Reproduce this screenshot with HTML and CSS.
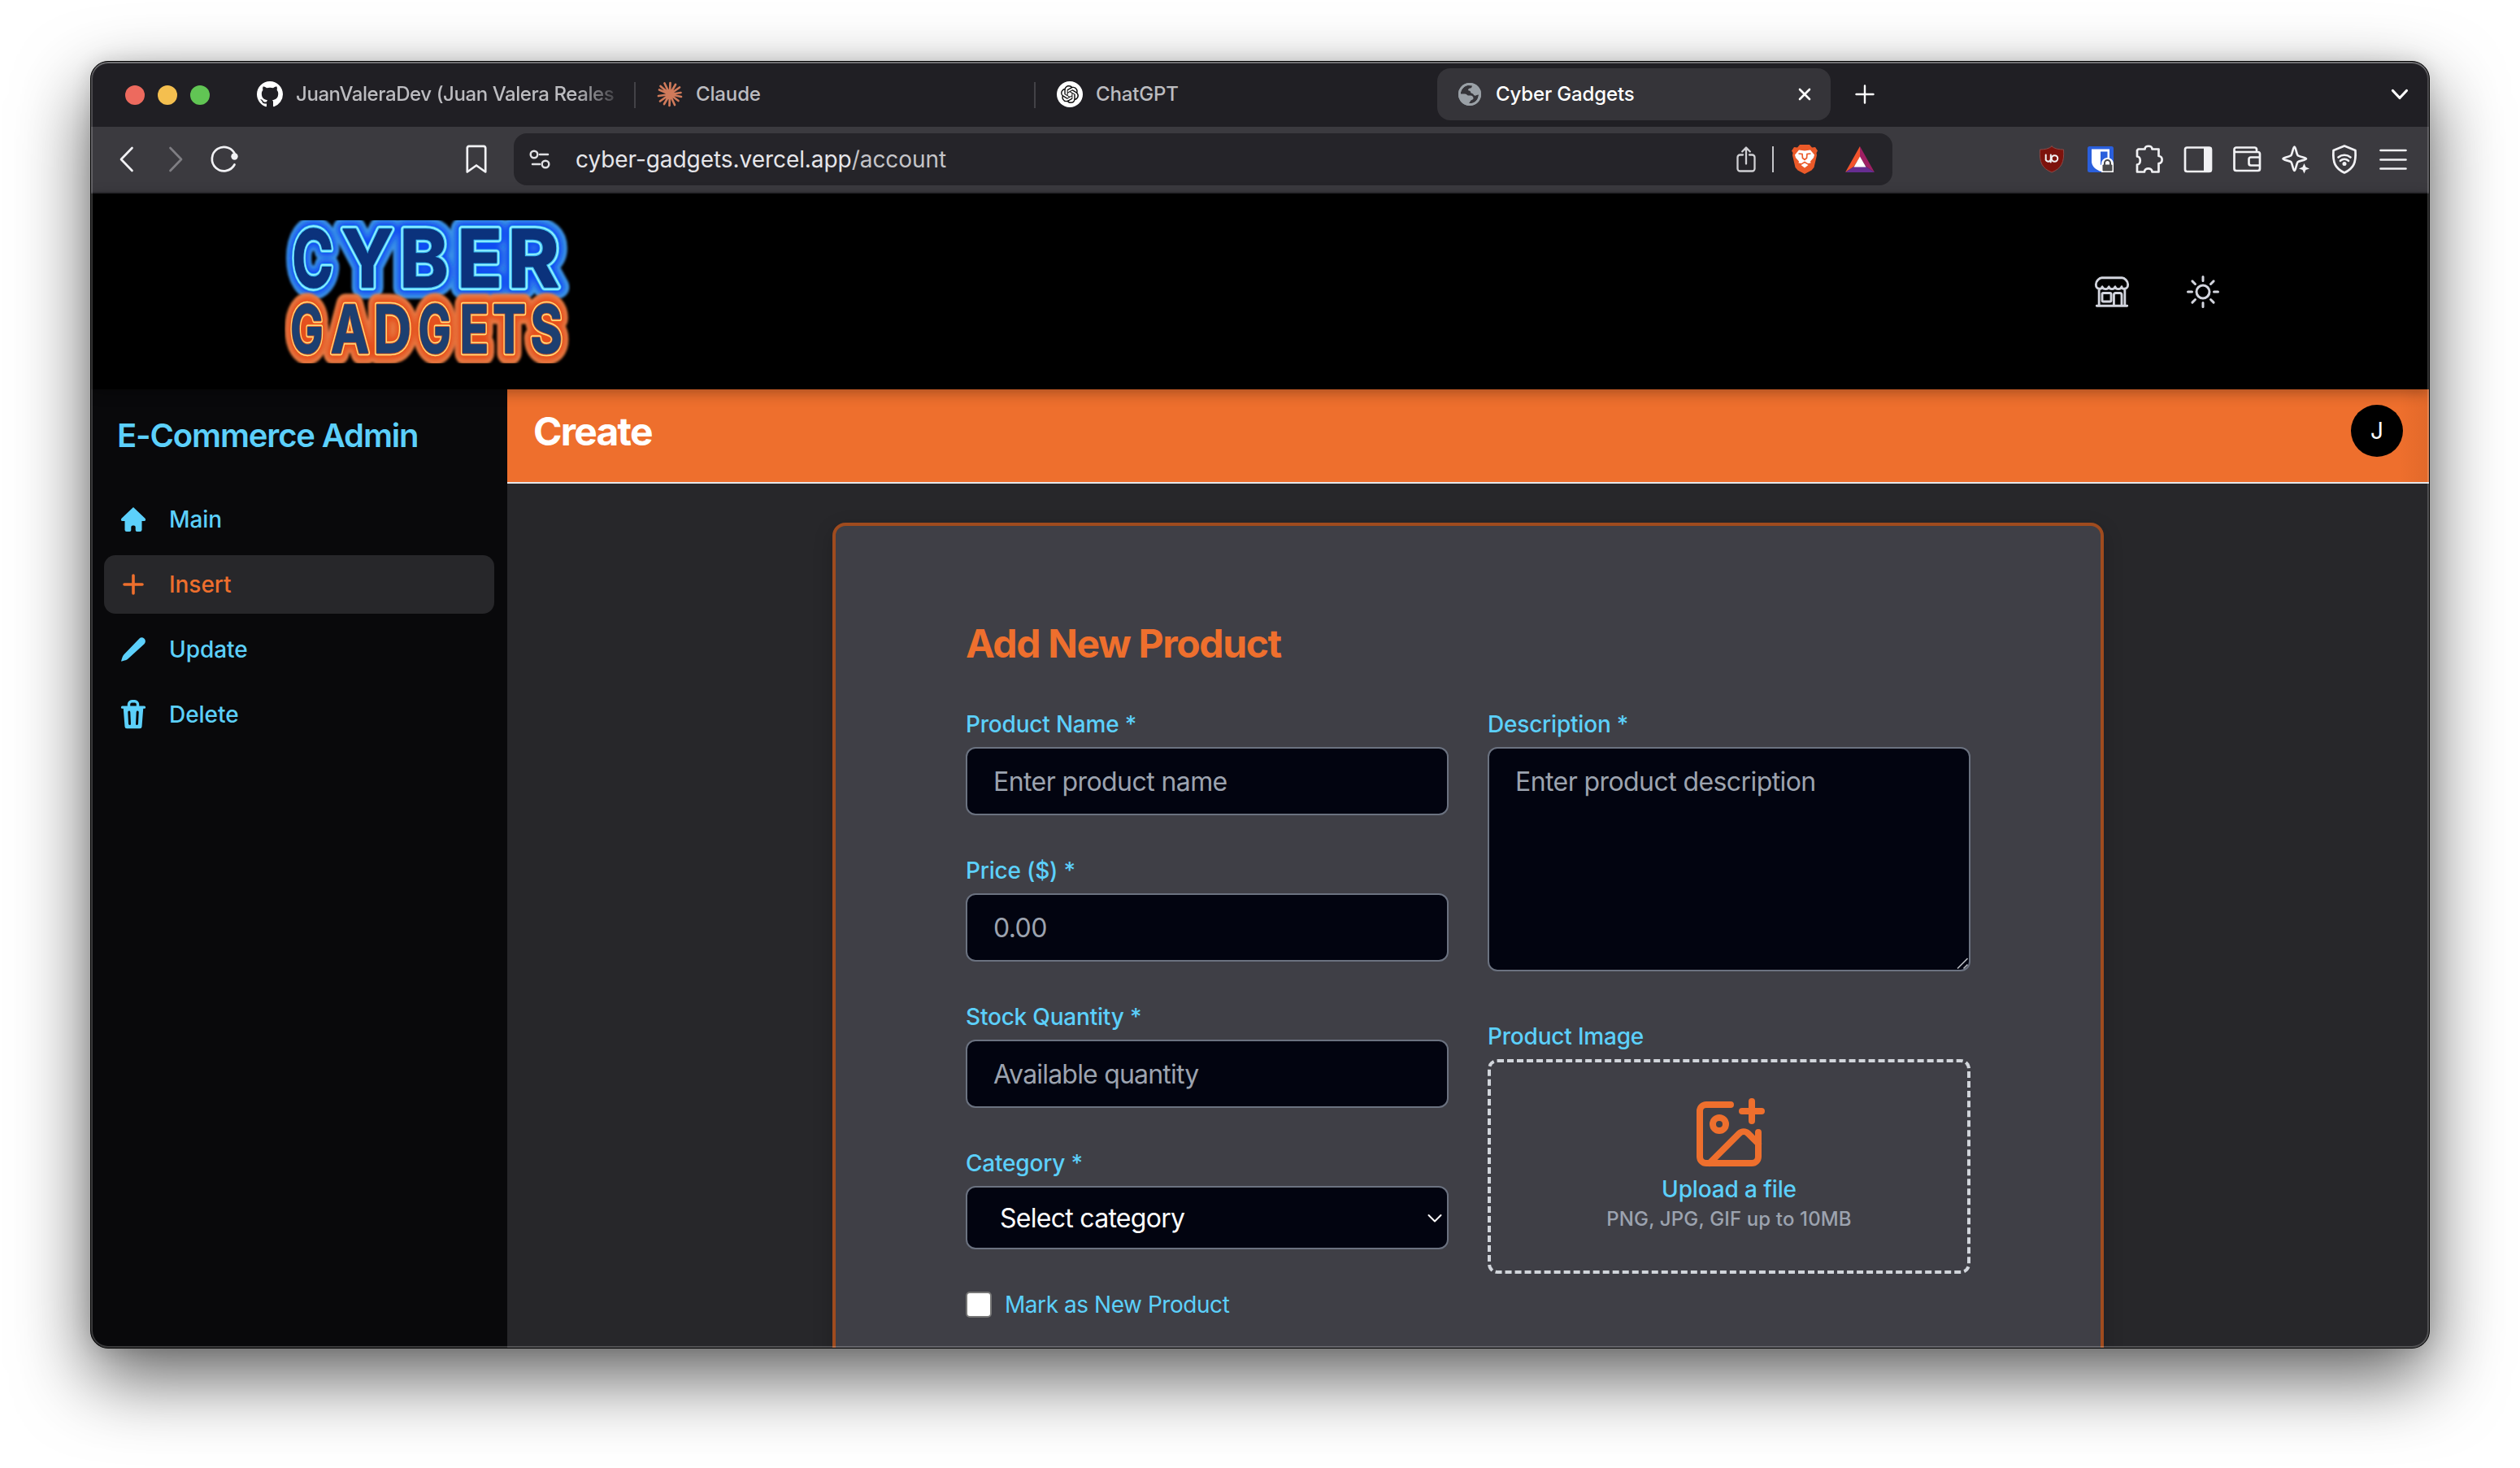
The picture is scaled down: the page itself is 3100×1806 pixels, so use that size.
FILE: index.html
```html
<!DOCTYPE html>
<html lang="en">
<head>
<meta charset="utf-8">
<title>Cyber Gadgets</title>
<link rel="stylesheet" href="styles.css">
</head>
<body>
<div class="window">
  <div class="tabstrip">
    <div class="lights"><i class="light red"></i><i class="light yellow"></i><i class="light green"></i></div>
    <div class="tabs">
      <div class="tab">
        <svg class="favicon" viewBox="0 0 16 16" fill="#fff"><path d="M8 0C3.58 0 0 3.58 0 8c0 3.54 2.29 6.53 5.47 7.59.4.07.55-.17.55-.38 0-.19-.01-.82-.01-1.49-2.01.37-2.53-.49-2.69-.94-.09-.23-.48-.94-.82-1.13-.28-.15-.68-.52-.01-.53.63-.01 1.08.58 1.23.82.72 1.21 1.87.87 2.33.66.07-.52.28-.87.51-1.07-1.78-.2-3.64-.89-3.64-3.95 0-.87.31-1.59.82-2.15-.08-.2-.36-1.02.08-2.12 0 0 .67-.21 2.2.82.64-.18 1.32-.27 2-.27s1.36.09 2 .27c1.53-1.04 2.2-.82 2.2-.82.44 1.1.16 1.92.08 2.12.51.56.82 1.27.82 2.15 0 3.07-1.87 3.75-3.65 3.95.29.25.54.73.54 1.48 0 1.07-.01 1.93-.01 2.2 0 .21.15.46.55.38A8.01 8.01 0 0 0 16 8c0-4.42-3.58-8-8-8z"/></svg>
        <span class="tab-title faded">JuanValeraDev (Juan Valera Reales</span>
      </div>
      <div class="tab divided">
        <svg class="favicon" viewBox="0 0 32 32" stroke="#d07a5a" stroke-width="2.7" stroke-linecap="round"><path d="M16 16 9.500 2.500M16 16 16.500 2M16 16 23 4M16 16 28 7.500M16 16 29.500 14M16 16 30 19M16 16 26.500 24M16 16 22 29M16 16 15.500 30M16 16 9 28M16 16 4 24.500M16 16 2 18M16 16 3 10.500M16 16 4.500 6"/></svg>
        <span class="tab-title">Claude</span>
      </div>
      <div class="tab divided">
        <svg class="favicon" viewBox="0 0 32 32"><circle cx="16" cy="16" r="16" fill="#fff"/><path transform="translate(5 5) scale(.917)" fill="#111" d="M22.2819 9.8211a5.9847 5.9847 0 0 0-.5157-4.9108 6.0462 6.0462 0 0 0-6.5098-2.9A6.0651 6.0651 0 0 0 4.9807 4.1818a5.9847 5.9847 0 0 0-3.9977 2.9 6.0462 6.0462 0 0 0 .7427 7.0966 5.98 5.98 0 0 0 .511 4.9107 6.051 6.051 0 0 0 6.5146 2.9001A5.9847 5.9847 0 0 0 13.2599 24a6.0557 6.0557 0 0 0 5.7718-4.2058 5.9894 5.9894 0 0 0 3.9977-2.9001 6.0557 6.0557 0 0 0-.7475-7.0729zm-9.022 12.6081a4.4755 4.4755 0 0 1-2.8764-1.0408l.1419-.0804 4.7783-2.7582a.7948.7948 0 0 0 .3927-.6813v-6.7369l2.02 1.1686a.071.071 0 0 1 .038.052v5.5826a4.504 4.504 0 0 1-4.4945 4.4944zm-9.6607-4.1254a4.4708 4.4708 0 0 1-.5346-3.0137l.142.0852 4.783 2.7582a.7712.7712 0 0 0 .7806 0l5.8428-3.3685v2.3324a.0804.0804 0 0 1-.0332.0615L9.74 19.9502a4.4992 4.4992 0 0 1-6.1408-1.6464zM2.3408 7.8956a4.485 4.485 0 0 1 2.3655-1.9728V11.6a.7664.7664 0 0 0 .3879.6765l5.8144 3.3543-2.0201 1.1685a.0757.0757 0 0 1-.071 0l-4.8303-2.7865A4.504 4.504 0 0 1 2.3408 7.872zm16.5963 3.8558L13.1038 8.364 15.1192 7.2a.0757.0757 0 0 1 .071 0l4.8303 2.7913a4.4944 4.4944 0 0 1-.6765 8.1042v-5.6772a.79.79 0 0 0-.407-.667zm2.0107-3.0231l-.142-.0852-4.7735-2.7818a.7759.7759 0 0 0-.7854 0L9.409 9.2297V6.8974a.0662.0662 0 0 1 .0284-.0615l4.8303-2.7866a4.4992 4.4992 0 0 1 6.6802 4.66zM8.3065 12.863l-2.02-1.1638a.0804.0804 0 0 1-.038-.0567V6.0742a4.4992 4.4992 0 0 1 7.3757-3.4537l-.142.0805L8.704 5.459a.7948.7948 0 0 0-.3927.6813zm1.0976-2.3654l2.602-1.4998 2.6069 1.4998v2.9994l-2.5974 1.4997-2.6067-1.4997Z"/></svg>
        <span class="tab-title">ChatGPT</span>
      </div>
      <div class="tab active">
        <svg class="favicon" viewBox="0 0 32 32"><circle cx="16" cy="16" r="14" fill="#9aa0a6"/><path d="M13.500 5C9 6 5 10 4.800 15.500H10c2 0 2.500 1.500 4 2h3c2 0 3.500 1.500 3.500 3.500 0 1.500-2 1.700-3 2.500-1 1-1 2-2.500 3.500 5 1 9.500-2 11-6.500l1-4-2.500.5c-1.500 1.500-3.500.5-4-1-1-1.500-3.500-1-3.500-3 0-1.500-2-1-3-2 0-1.500 1-2.500 2.500-2.500 2 0 2-1.500 2.500-3Z" fill="#353439"/><circle cx="16" cy="16" r="12.600" fill="none" stroke="#9aa0a6" stroke-width="2.800"/></svg>
        <span class="tab-title">Cyber Gadgets</span>
        <svg class="tab-close" viewBox="0 0 16 16" stroke="#fff" stroke-width="2.600" stroke-linecap="round"><path d="M2 2 14 14M14 2 2 14"/></svg>
      </div>
    </div>
    <svg class="new-tab" viewBox="0 0 24 24" stroke="#fff" stroke-width="2.400" stroke-linecap="round"><path d="M12 1.500V22.500M1.500 12H22.500"/></svg>
    <svg class="tab-menu" viewBox="0 0 24 16" fill="none" stroke="#fff" stroke-width="3.200" stroke-linecap="round" stroke-linejoin="round"><path d="M3.500 3.500 12 12.500 20.500 3.500"/></svg>
  </div>

  <div class="toolbar">
    <div class="nav-buttons">
      <svg class="tool" viewBox="0 0 60 40"><path d="M36.500 6 23 20 36.500 34"/></svg>
      <svg class="tool dim" viewBox="0 0 60 40"><path d="M23.500 6 37 20 23.500 34"/></svg>
      <svg class="tool" viewBox="0 0 60 40"><path d="M42.500 26.500A14.700 14.700 0 1 1 43.500 15"/><circle cx="42.500" cy="16.500" r="4.200" fill="#f1f1f4" stroke="none"/></svg>
    </div>
    <svg class="tool" viewBox="0 0 60 40"><path d="M21 3.800H39A2.500 2.500 0 0 1 41.200 6V35.500L30 27.500 18.800 35.500V6A2.500 2.500 0 0 1 21 3.800Z"/></svg>
    <div class="url-bar">
      <svg class="site-info" viewBox="0 0 26 24" fill="none" stroke="#dfdfe3" stroke-width="2.500" stroke-linecap="round"><circle cx="6" cy="6" r="4.300"/><path d="M13 6H23"/><circle cx="20" cy="18" r="4.300"/><path d="M4 18H13"/></svg>
      <span class="url">cyber-gadgets.vercel.app<span class="url-path">/account</span></span>
      <svg class="share" viewBox="0 0 24 34" fill="none" stroke="#cfcfd3" stroke-width="2.300" stroke-linecap="round" stroke-linejoin="round"><path d="M8 11.500H4.500A3 3 0 0 0 1.500 14.500V28.500A3 3 0 0 0 4.500 31.500H19.500A3 3 0 0 0 22.500 28.500V14.500A3 3 0 0 0 19.500 11.500H16M12 22.500V3M7.200 7.500 12 2.500 16.800 7.500"/></svg>
      <i class="bar-sep"></i>
      <svg class="brave" viewBox="0 0 32 36"><path d="M10 0H22L25 3.500 29 3 32 7.500 30.500 10 31 13 27.500 28 24.500 31.500 16 36 7.500 31.500 4.500 28 1 13 1.500 10 0 7.500 3 3 7 3.500Z" fill="#eb5a29"/><path d="M16 7.500 23 6.500 28 12.500 27 16 23 20.500 23.500 22.500 20 23 16 20.500 12 23 8.500 22.500 9 20.500 5 16 4 12.500 9 6.500Z" fill="#fff"/><path d="M16 22.500 20.500 25 16 28.500 11.500 25Z" fill="#fff"/><path d="M8.500 11 13 11.500 13.500 16.500 16 18.500 18.500 16.500 19 11.500 23.500 11" fill="none" stroke="#eb5a29" stroke-width="1.700"/></svg>
      <svg class="bat" viewBox="0 0 36 32"><path d="M18 0V13L10.500 25 0 32Z" fill="#f2542d"/><path d="M18 0V13L25.500 25 36 32Z" fill="#9e1f63"/><path d="M0 32H36L25.500 25H10.500Z" fill="#662d91"/><path d="M18 12.500 25.500 25.500H10.500Z" fill="#fff"/></svg>
    </div>
    <div class="extensions">
      <svg class="tool" viewBox="0 0 60 40"><path d="M30 4C33 7 39 8 44.500 8 45.500 24 42 31 30 36 18 31 14.500 24 15.500 8 21 8 27 7 30 4Z" fill="#7d120c" stroke="#8b4a48" stroke-width="1"/><path d="M22.700 14.500V19A3 3 0 0 0 28.500 20.500M28.800 14.500V23.500" stroke-width="2"/><circle cx="33.500" cy="19" r="3.800" stroke-width="2"/></svg>
      <svg class="tool" viewBox="0 0 60 40"><rect x="14" y="4" width="32" height="32" rx="2.500" fill="#2a5fdc" stroke="none"/><path d="M19 7.500H41V22C41 28 37 32 30 35 23 32 19 28 19 22Z" fill="#fff" stroke="none"/><path d="M30 10.500H38.500V22L30 27Z" fill="#2a5fdc" stroke="none"/><path d="M31 36V26A7.500 7.500 0 0 1 46 25V36Z" fill="#fff" stroke="none"/><rect x="32.500" y="26.500" width="12" height="8" rx="1" fill="#4a4a4a" stroke="none"/><path d="M35 27V24.500A3.500 3.500 0 0 1 42 24.500V27" stroke="#4a4a4a" stroke-width="2"/></svg>
      <svg class="tool" viewBox="0 0 60 40"><path d="M16.500 7.500H24.500C24.500 2.500 33.500 2.500 33.500 7.500H41.500V16C47 16 47 25 41.500 25V35.500H33.500C33.500 30 24 30 24 35.500H15V26.500C20 26.500 20 16.500 15 16.500V9Z"/></svg>
      <svg class="tool" viewBox="0 0 60 40"><rect x="14" y="5.500" width="32" height="29.500" rx="2.500"/><path d="M37 5H45A2 2 0 0 1 47 7V33A2 2 0 0 1 45 35H37Z" fill="#f1f1f4" stroke="none"/></svg>
      <svg class="tool" viewBox="0 0 60 40"><path d="M42 9V7.500A2.500 2.500 0 0 0 39.500 5.500H17A2.500 2.500 0 0 0 14.500 8V31.500A2.500 2.500 0 0 0 17 34H43.500A2.500 2.500 0 0 0 46 31.500V13.500A2.500 2.500 0 0 0 43.500 11H16M46 17.500H35A2.500 2.500 0 0 0 32.500 20V25A2.500 2.500 0 0 0 35 27.500H46"/></svg>
      <svg class="tool" viewBox="0 0 60 40"><path d="M28.500 4.500C30 4.500 31 13 32.500 15 34 17 43 17.500 43 19.200 43 21 34 21.500 32.500 23.500 31 25.500 30 34 28.500 34 27 34 26 25.500 24.500 23.500 23 21.500 14.500 21 14.500 19.200 14.500 17.500 23 17 24.500 15 26 13 27 4.500 28.500 4.500Z"/><path d="M40.500 25 42.500 29.500 47 31.500 42.500 33 40.500 37.500 38.500 33 34 31.500 38.500 29.500Z" fill="#f1f1f4" stroke="none"/></svg>
      <svg class="tool" viewBox="0 0 60 40"><path d="M30 3.500 43.500 9C44.500 24 41.500 31 30 36.500 18.500 31 15.500 24 16.500 9Z"/><path d="M22.500 17.500C27 13.800 33 13.800 37.500 17.500M25 21.800C28 19.300 32 19.300 35 21.800"/><circle cx="30" cy="25.500" r="2.500" fill="#f1f1f4" stroke="none"/></svg>
      <svg class="tool" viewBox="0 0 60 40"><path d="M14.500 9H45.500M14.500 20.500H45.500M14.500 31.500H45.500"/></svg>
    </div>
  </div>

  <header class="site-header">
    <svg class="logo" viewBox="0 0 352 176" role="img" aria-label="Cyber Gadgets">
      <defs>
        <filter id="soft" x="-15%" y="-30%" width="130%" height="160%"><feGaussianBlur stdDeviation="1.500"/></filter>
        <filter id="haze" x="-15%" y="-30%" width="130%" height="160%"><feGaussianBlur stdDeviation="3"/></filter>
        <g id="cyber" font-size="97.600">
          <text x="9.200" y="81.500" textLength="50.800" lengthAdjust="spacingAndGlyphs">C</text>
          <text x="70.300" y="81.500" textLength="63.500" lengthAdjust="spacingAndGlyphs">Y</text>
          <text x="141.200" y="81.500" textLength="60.500" lengthAdjust="spacingAndGlyphs">B</text>
          <text x="212.200" y="81.500" textLength="55.600" lengthAdjust="spacingAndGlyphs">E</text>
          <text x="274.200" y="81.500" textLength="63.700" lengthAdjust="spacingAndGlyphs">R</text>
        </g>
        <g id="gadgets" font-size="81">
          <text x="7.200" y="162.500" textLength="40.300" lengthAdjust="spacingAndGlyphs">G</text>
          <text x="56.900" y="162.500" textLength="47" lengthAdjust="spacingAndGlyphs">A</text>
          <text x="109.500" y="162.500" textLength="46.500" lengthAdjust="spacingAndGlyphs">D</text>
          <text x="164.600" y="162.500" textLength="40.300" lengthAdjust="spacingAndGlyphs">G</text>
          <text x="215.500" y="162.500" textLength="35.700" lengthAdjust="spacingAndGlyphs">E</text>
          <text x="255.900" y="162.500" textLength="41" lengthAdjust="spacingAndGlyphs">T</text>
          <text x="302.600" y="162.500" textLength="39.200" lengthAdjust="spacingAndGlyphs">S</text>
        </g>
      </defs>
      <use href="#cyber" stroke="#3f97e6" stroke-width="29" filter="url(#soft)"/>
      <use href="#cyber" stroke="#0f49f2" stroke-width="17" filter="url(#haze)"/>
      <use href="#gadgets" stroke="#e8804a" stroke-width="27" filter="url(#soft)"/>
      <use href="#gadgets" stroke="#e4501f" stroke-width="17" filter="url(#haze)"/>
      <use href="#cyber" stroke="#35b4f4" stroke-width="9.500"/>
      <use href="#cyber" stroke="#92f2ff" stroke-width="7.500"/>
      <use href="#cyber" stroke="#3fbdf2" stroke-width="4"/>
      <use href="#cyber" fill="#0b327c" stroke="#0b327c" stroke-width="1.500"/>
      <use href="#gadgets" stroke="#f2581f" stroke-width="8.500"/>
      <use href="#gadgets" stroke="#ffe27c" stroke-width="6.500"/>
      <use href="#gadgets" stroke="#e8622c" stroke-width="3.500"/>
      <use href="#gadgets" fill="#1d3f70" stroke="#1d3f70" stroke-width="1.500"/>
    </svg>
    <div class="header-actions">
      <svg class="header-icon" viewBox="-1 -1 50 50"><path d="M11 6H37C40 6 44.500 10 44.500 14.500 44.500 18 42.500 20 40 20 37.500 20.500 36.500 19 36.500 17.500 36 20 34.500 20.500 32 20.500 29.500 20.500 28.500 19 28 17.500 27.500 20 26.500 20.500 24 20.500 21.500 20.500 20.500 19 20 17.500 19.500 20 18 20.500 16 20.500 13.500 20.500 12 19 11.500 17.500 11 19.500 10 20.500 8 20 5.500 20 3.500 18 3.500 14.500 3.500 10 8 6 11 6ZM7.500 20.500V42M40.500 20.500V42M4.500 42H43.500M26.500 42V28A2.500 2.500 0 0 1 29 25.500H34A2.500 2.500 0 0 1 36.500 28V42"/><rect x="11.500" y="25.500" width="11.500" height="11" rx="1.500"/></svg>
      <svg class="header-icon" viewBox="0 0 48 48"><circle cx="24" cy="24" r="8"/><path d="M24 5.500V10.500M24 37.500V42.500M5.500 24H10.500M37.500 24H42.500M10.900 10.900 14.500 14.500M33.500 33.500 37.100 37.100M10.900 37.100 14.500 33.500M33.500 14.500 37.100 10.900"/></svg>
    </div>
  </header>

  <div class="app">
    <aside class="sidebar">
      <h2 class="brand">E-Commerce Admin</h2>
      <nav class="menu">
        <a class="menu-item"><svg class="menu-icon" viewBox="0 0 40 40" fill="currentColor"><path d="M20 5 34.500 18.800C35.800 20.300 35 22 33.500 22H30.500V33A2.200 2.200 0 0 1 28.300 35H24.500A1.800 1.800 0 0 1 22.700 33.200V29.500A2 2 0 0 0 20.700 27.500H19.300A2 2 0 0 0 17.300 29.500V33.200A1.800 1.800 0 0 1 15.500 35H11.700A2.200 2.200 0 0 1 9.500 33V22H6.500C5 22 4.200 20.300 5.500 18.800Z"/></svg>Main</a>
        <a class="menu-item selected"><svg class="menu-icon" viewBox="0 0 40 40" fill="none" stroke="currentColor" stroke-width="3.600" stroke-linecap="round"><path d="M20 9V31M9 20H31"/></svg>Insert</a>
        <a class="menu-item"><svg class="menu-icon" viewBox="0 0 40 40" fill="currentColor"><path d="M33.300 6.500C35.500 8.500 35.200 11.500 33.500 13.200L14 31C12.500 32.500 11 33 9.200 33.600L6 34.600C5.200 34.800 5 34.400 5.200 33.700L6.200 30.500C6.800 28.500 7.500 27.300 8.700 26L27.500 6.500C29.200 4.800 31.600 5 33.300 6.500Z"/></svg>Update</a>
        <a class="menu-item"><svg class="menu-icon" viewBox="0 0 40 40" fill="none" stroke-linecap="round"><path d="M14.500 10V7.500A3.700 3.700 0 0 1 18.200 3.800H21.800A3.700 3.700 0 0 1 25.500 7.500V10" stroke="currentColor" stroke-width="3.400"/><path d="M6.500 9.500H33.500A1.600 1.600 0 0 1 33.500 12.800H32.200L30.500 35A2.500 2.500 0 0 1 28 37.300H12A2.500 2.500 0 0 1 9.500 35L7.800 12.800H6.500A1.600 1.600 0 0 1 6.500 9.500Z" fill="currentColor"/><path d="M14.800 17 15.500 31.500M25.200 17 24.500 31.500" stroke="#09090b" stroke-width="3"/></svg>Delete</a>
      </nav>
    </aside>

    <div class="content">
      <div class="page-bar">
        <h1 class="page-title">Create</h1>
        <div class="avatar">J</div>
      </div>
      <main class="main">
        <section class="card">
          <h2 class="card-title">Add New Product</h2>
          <div class="form">
            <div class="column">
              <div class="field"><span class="label">Product Name *</span><div class="input placeholder">Enter product name</div></div>
              <div class="field"><span class="label">Price ($) *</span><div class="input placeholder">0.00</div></div>
              <div class="field"><span class="label">Stock Quantity *</span><div class="input placeholder tight">Available quantity</div></div>
              <div class="field"><span class="label">Category *</span>
                <div class="input select">Select category<svg class="caret" viewBox="0 0 18 12" fill="none" stroke="#fff" stroke-width="2" stroke-linecap="round" stroke-linejoin="round"><path d="M1.500 2 9 9.500 16.500 2"/></svg></div>
              </div>
              <div class="check-row"><i class="checkbox"></i><span class="check-label">Mark as New Product</span></div>
            </div>
            <div class="column">
              <div class="field"><span class="label">Description *</span>
                <div class="input textarea placeholder">Enter product description<svg class="grip" viewBox="0 0 14 14" stroke="#b5b8bd" stroke-width="1.600"><path d="M1 13.500 13.500 1M8.500 13.500 13.500 8.500"/></svg></div>
              </div>
              <div class="field image-field"><span class="label">Product Image</span>
                <div class="dropzone">
                  <svg class="upload-icon" viewBox="0 0 24 24" fill="none" stroke="#ee6f2d" stroke-width="2" stroke-linecap="round" stroke-linejoin="round"><path d="M16 5h6M19 2v6M21 11.500V19a2 2 0 0 1-2 2H5a2 2 0 0 1-2-2V5a2 2 0 0 1 2-2h7.500M21 15l-3.086-3.086a2 2 0 0 0-2.828 0L6 21"/><circle cx="9" cy="9" r="2"/></svg>
                  <span class="upload-link">Upload a file</span>
                  <span class="upload-hint">PNG, JPG, GIF up to 10MB</span>
                </div>
              </div>
            </div>
          </div>
        </section>
      </main>
    </div>
  </div>
</div>
</body>
</html>
```
FILE: styles.css
```css
* { box-sizing: border-box; margin: 0; padding: 0; }
svg { display: block; flex: none; }

body {
  width: 3100px;
  height: 1806px;
  padding: 75px 111px;
  overflow: hidden;
  background: #fff;
  font-family: Inter, "Liberation Sans", sans-serif;
  font-size: 28px;
  line-height: 40px;
}

/* Browser window */
.window {
  position: relative;
  display: flex;
  flex-direction: column;
  width: 2878px;
  height: 1584px;
  overflow: hidden;
  border: 1px solid #000;
  border-radius: 22px;
  background: #27272a;
  box-shadow: 0 36px 90px rgba(0, 0, 0, .62), 0 0 24px rgba(0, 0, 0, .12);
}
.window::after {
  content: "";
  position: absolute;
  inset: 0;
  z-index: 2;
  border-radius: 21px;
  box-shadow: inset 0 0 0 2px rgba(255, 255, 255, .2), inset 0 2px 0 rgba(255, 255, 255, .2);
  pointer-events: none;
}

/* Tab strip */
.tabstrip {
  display: flex;
  align-items: center;
  flex: none;
  height: 80px;
  padding: 0 24px 0 42px;
  background: #201f24;
}
.lights { display: flex; gap: 16px; padding-top: 1px; }
.light { width: 24px; height: 24px; border-radius: 50%; }
.red { background: #ed6a5e; }
.yellow { background: #f4bf4f; }
.green { background: #61c554; }
.tabs { display: flex; gap: 8px; margin-left: 34px; }
.tab {
  position: relative;
  display: flex;
  align-items: center;
  width: 484px;
  height: 64px;
  padding: 0 24px;
  gap: 16px;
  border-radius: 16px;
  color: #bcbcc0;
}
.tab.active { background: #353439; color: #fff; }
.divided::before {
  content: "";
  position: absolute;
  left: -4px;
  top: 17px;
  width: 2px;
  height: 32px;
  background: #434247;
}
.favicon { width: 32px; height: 32px; }
.tab-title {
  flex: 1;
  white-space: nowrap;
  font-size: 24px;
  font-weight: 500;
  letter-spacing: -.14px;
}
.faded {
  flex: none;
  letter-spacing: -.42px;
  -webkit-mask-image: linear-gradient(90deg, #000 88%, rgba(0, 0, 0, .25));
  mask-image: linear-gradient(90deg, #000 88%, rgba(0, 0, 0, .25));
}
.tab-close { width: 16px; height: 16px; }
.new-tab { width: 24px; height: 24px; margin-left: 30px; }
.tab-menu { width: 24px; height: 16px; margin-left: auto; }

/* Toolbar */
.toolbar {
  display: flex;
  align-items: center;
  flex: none;
  height: 82px;
  padding: 0 14px;
  border-bottom: 2px solid #2e2d32;
  background: #3b3a3f;
}
.tool {
  width: 60px;
  height: 40px;
  fill: none;
  stroke: #f1f1f4;
  stroke-width: 2.7;
  stroke-linecap: round;
  stroke-linejoin: round;
}
.dim { stroke: #7f7e83; }
.nav-buttons { display: flex; margin-right: 250px; }
.url-bar {
  display: flex;
  align-items: center;
  width: 1696px;
  height: 64px;
  margin-left: 16px;
  padding: 0 22px 0 19px;
  border-radius: 16px;
  background: #252429;
}
.site-info { width: 26px; height: 24px; }
.url { flex: 1; margin-left: 31px; color: #e6e6ea; letter-spacing: -.06px; }
.url-path { color: #c4c4c8; }
.share { width: 24px; height: 34px; }
.bar-sep { width: 2px; height: 32px; margin: 0 22px 0 20px; background: #c4c4c8; }
.brave { width: 32px; height: 36px; }
.bat { width: 36px; height: 32px; margin-left: 34px; }
.extensions { display: flex; margin-left: auto; }

/* Store header */
.site-header {
  position: relative;
  z-index: 1;
  display: flex;
  align-items: center;
  justify-content: space-between;
  flex: none;
  height: 241px;
  padding: 0 254px 0 238px;
  background: #000;
  box-shadow: 0 4px 16px rgba(0, 0, 0, .3);
}
.logo {
  width: 352px;
  height: 176px;
  overflow: hidden;
  font-family: Inter, sans-serif;
  font-weight: 700;
  fill: none;
  stroke-linejoin: round;
}
.header-actions { display: flex; gap: 64px; }
.header-icon {
  width: 48px;
  height: 48px;
  fill: none;
  stroke: #d3d5de;
  stroke-width: 3;
  stroke-linecap: round;
  stroke-linejoin: round;
}

/* Admin layout */
.app { display: flex; flex: 1; min-height: 0; }
.sidebar { width: 512px; padding: 29px 16px; background: #09090b; color: #5cd0fb; }
.brand { padding: 0 16px; font-size: 40px; font-weight: 600; line-height: 56px; letter-spacing: -1.15px; }
.menu { display: flex; flex-direction: column; gap: 8px; margin-top: 39px; }
.menu-item {
  display: flex;
  align-items: center;
  gap: 24px;
  height: 72px;
  padding: 0 16px;
  border-radius: 14px;
  font-weight: 500;
  letter-spacing: -.05px;
}
.selected { background: #27272a; color: #ee6f2d; }
.menu-icon { width: 40px; height: 40px; }

.content { display: flex; flex-direction: column; flex: 1; min-width: 0; }
.page-bar {
  display: flex;
  justify-content: space-between;
  flex: none;
  height: 116px;
  padding: 19px 32px 0;
  border-bottom: 2px solid #e5e7eb;
  background: linear-gradient(270deg, #e2692a, #ee6f2d 36px);
}
.page-title { padding-top: 1px; color: #fff; font-size: 48px; line-height: 64px; letter-spacing: -1.8px; }
.avatar {
  width: 64px;
  height: 64px;
  border-radius: 50%;
  background: #000;
  color: #fff;
  line-height: 65px;
  text-align: center;
}
.main { display: flex; justify-content: center; flex: 1; min-height: 0; overflow: hidden; padding-top: 48px; background: #27272a; }

/* Product form */
.card {
  width: 1564px;
  height: 1300px;
  padding: 113px 160px;
  border: 4px solid #9f4b1e;
  border-radius: 16px;
  background: #3f3f46;
  box-shadow: 0 8px 24px rgba(0, 0, 0, .2);
}
.card-title { color: #ee6f2d; font-size: 48px; line-height: 64px; letter-spacing: -1.36px; }
.form { display: grid; grid-template-columns: 1fr 1fr; gap: 48px; margin-top: 47px; }
.column { display: flex; flex-direction: column; gap: 48px; }
.field { display: flex; flex-direction: column; gap: 8px; }
.label { color: #5cd0fb; font-weight: 500; letter-spacing: -.2px; }
.input {
  display: flex;
  align-items: center;
  height: 84px;
  padding: 2px 32px 0;
  border: 2px solid #6b7280;
  border-radius: 12px;
  background: #020410;
  font-size: 32px;
  letter-spacing: -.58px;
}
.placeholder { color: #9ca3af; }
.tight { letter-spacing: -.8px; }
.select { justify-content: space-between; height: 78px; padding: 1px 6px 0 40px; color: #fff; letter-spacing: -.72px; }
.caret { width: 18px; height: 12px; }
.textarea { position: relative; align-items: flex-start; height: 276px; padding-top: 21px; }
.grip { position: absolute; right: 1px; bottom: 1px; width: 14px; height: 14px; }
.check-row { display: flex; align-items: center; gap: 16px; }
.checkbox { width: 32px; height: 32px; border: 2px solid #767676; border-radius: 5px; background: #fff; }
.check-label { color: #5cd0fb; letter-spacing: -.45px; }
.image-field { margin-top: 12px; }
.dropzone {
  display: flex;
  flex-direction: column;
  align-items: center;
  height: 264px;
  padding-top: 40px;
  border: 4px dashed #d1d5db;
  border-radius: 12px;
}
.upload-icon { width: 96px; height: 96px; }
.upload-link { color: #5cd0fb; font-weight: 500; letter-spacing: -.14px; }
.upload-hint { padding-top: 1px; color: #9ca3af; font-size: 24px; font-weight: 500; line-height: 32px; letter-spacing: .14px; }
```
